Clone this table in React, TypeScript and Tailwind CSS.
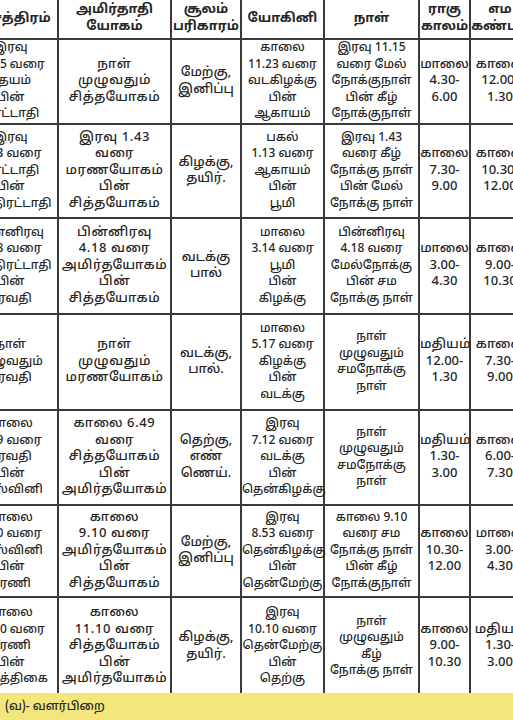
import React from "react";

const widths = [95, 113, 70, 83, 95, 51, 60];

const header: string[][] = [
  ["நட்சத்திரம்"],
  ["அமிர்தாதி", "யோகம்"],
  ["சூலம்", "பரிகாரம்"],
  ["யோகினி"],
  ["நாள்"],
  ["ராகு", "காலம்"],
  ["எம", "கண்டம்"],
];

const rows: { h: number; cells: string[][] }[] = [
  {
    h: 85,
    cells: [
      ["இரவு", "11.15 வரை", "சதயம்", "பின்", "பூரட்டாதி"],
      ["நாள்", "முழுவதும்", "சித்தயோகம்"],
      ["மேற்கு,", "இனிப்பு"],
      ["காலை", "11.23 வரை", "வடகிழக்கு", "பின்", "ஆகாயம்"],
      ["இரவு 11.15", "வரை மேல்", "நோக்குநாள்", "பின் கீழ்", "நோக்குநாள்"],
      ["மாலை", "4.30-", "6.00"],
      ["காலை", "12.00-", "1.30"],
    ],
  },
  {
    h: 94,
    cells: [
      ["இரவு", "1.43 வரை", "பூரட்டாதி", "பின்", "உத்திரட்டாதி"],
      ["இரவு 1.43", "வரை", "மரணயோகம்", "பின்", "சித்தயோகம்"],
      ["கிழக்கு,", "தயிர்."],
      ["பகல்", "1.13 வரை", "ஆகாயம்", "பின்", "பூமி"],
      ["இரவு 1.43", "வரை கீழ்", "நோக்கு நாள்", "பின் மேல்", "நோக்கு நாள்"],
      ["காலை", "7.30-", "9.00"],
      ["காலை", "10.30-", "12.00"],
    ],
  },
  {
    h: 96,
    cells: [
      ["பின்னிரவு", "4.18 வரை", "உத்திரட்டாதி", "பின்", "ரேவதி"],
      ["பின்னிரவு", "4.18 வரை", "அமிர்தயோகம்", "பின்", "சித்தயோகம்"],
      ["வடக்கு", "பால்"],
      ["மாலை", "3.14 வரை", "பூமி", "பின்", "கிழக்கு"],
      ["பின்னிரவு", "4.18 வரை", "மேல்நோக்கு", "பின் சம", "நோக்கு நாள்"],
      ["மாலை", "3.00-", "4.30"],
      ["காலை", "9.00-", "10.30"],
    ],
  },
  {
    h: 96,
    cells: [
      ["நாள்", "முழுவதும்", "ரேவதி"],
      ["நாள்", "முழுவதும்", "மரணயோகம்"],
      ["வடக்கு,", "பால்."],
      ["மாலை", "5.17 வரை", "கிழக்கு", "பின்", "வடக்கு"],
      ["நாள்", "முழுவதும்", "சமநோக்கு", "நாள்"],
      ["மதியம்", "12.00-", "1.30"],
      ["காலை", "7.30-", "9.00"],
    ],
  },
  {
    h: 95,
    cells: [
      ["காலை", "6.49 வரை", "ரேவதி", "பின்", "அஸ்வினி"],
      ["காலை 6.49", "வரை", "சித்தயோகம்", "பின்", "அமிர்தயோகம்"],
      ["தெற்கு,", "எண்", "ணெய்."],
      ["இரவு", "7.12 வரை", "வடக்கு", "பின்", "தென்கிழக்கு"],
      ["நாள்", "முழுவதும்", "சமநோக்கு", "நாள்"],
      ["மதியம்", "1.30-", "3.00"],
      ["காலை", "6.00-", "7.30"],
    ],
  },
  {
    h: 92,
    cells: [
      ["காலை", "9.10 வரை", "அஸ்வினி", "பின்", "பரணி"],
      ["காலை", "9.10 வரை", "அமிர்தயோகம்", "பின்", "சித்தயோகம்"],
      ["மேற்கு,", "இனிப்பு"],
      ["இரவு", "8.53 வரை", "தென்கிழக்கு", "பின்", "தென்மேற்கு"],
      ["காலை 9.10", "வரை சம", "நோக்கு நாள்", "பின் கீழ்", "நோக்குநாள்"],
      ["காலை", "10.30-", "12.00"],
      ["மாலை", "3.00-", "4.30"],
    ],
  },
  {
    h: 99,
    cells: [
      ["காலை", "11.10 வரை", "பரணி", "பின்", "கிருத்திகை"],
      ["காலை", "11.10 வரை", "சித்தயோகம்", "பின்", "அமிர்தயோகம்"],
      ["கிழக்கு,", "தயிர்."],
      ["இரவு", "10.10 வரை", "தென்மேற்கு", "பின்", "தெற்கு"],
      ["நாள்", "முழுவதும்", "கீழ்", "நோக்கு நாள்"],
      ["காலை", "9.00-", "10.30"],
      ["மதியம்", "1.30-", "3.00"],
    ],
  },
];

const colText = [
  "text-[12px]",
  "text-[13px] tracking-[0.6px]",
  "text-[13px]",
  "text-[12px]",
  "text-[12px]",
  "text-[13px]",
  "text-[13px]",
];

const font = {
  fontFamily: '"Noto Sans Tamil", "Lohit Tamil", "Noto Serif Tamil", "Noto Sans", "DejaVu Sans", sans-serif',
};

export default function App() {
  return (
    <div className="w-[513px] h-[720px] overflow-hidden bg-white text-[#262626] flex flex-col" style={font}>
      <div className="h-[693px] overflow-hidden">
        <table className="table-fixed border-collapse w-[567px] ml-[-38px] mt-[-2px]">
          <colgroup>
            {widths.map((w, i) => (
              <col key={i} style={{ width: w }} />
            ))}
          </colgroup>
          <thead>
            <tr className="h-[40px]">
              {header.map((lines, i) => (
                <th
                  key={i}
                  className="border-2 border-[#3a3a3a] text-center align-middle font-bold text-[13px] leading-[17px] px-0"
                >
                  {lines.map((l, j) => (
                    <div key={j} className="whitespace-nowrap">{l}</div>
                  ))}
                </th>
              ))}
            </tr>
          </thead>
          <tbody>
            {rows.map((r, ri) => (
              <tr key={ri} style={{ height: r.h }}>
                {r.cells.map((lines, ci) => (
                  <td
                    key={ci}
                    className={
                      "border-2 border-[#3a3a3a] text-center align-middle leading-[16.5px] px-0 font-medium " +
                      colText[ci]
                    }
                  >
                    {lines.map((l, j) => (
                      <div key={j} className="whitespace-nowrap">{l}</div>
                    ))}
                  </td>
                ))}
              </tr>
            ))}
          </tbody>
        </table>
      </div>
      <div className="flex-1 bg-[#f3e77c] flex items-center px-[5px] text-[12px] font-medium text-[#262626]">
        (வ)- வளர்பிறை
      </div>
    </div>
  );
}
